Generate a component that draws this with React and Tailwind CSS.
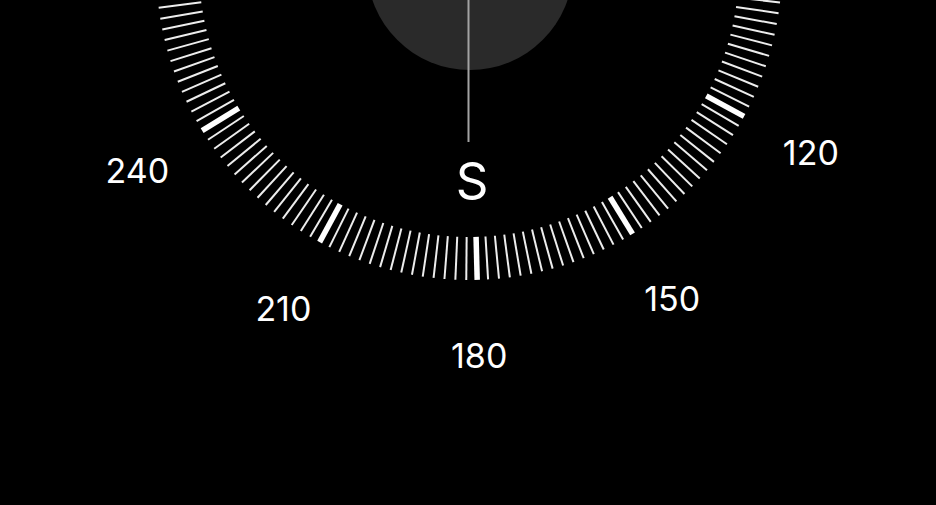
import React from "react";

// dial geometry (centre sits above the visible area)
const CX = 469;
const CY = -33;
const R_OUT = 313;
const R_IN = 270;
const R_LABEL = 389;
const TILT = -1.5; // dial is turned a little counter-clockwise

const rad = (deg) => (deg * Math.PI) / 180;

const polar = (r, deg) => ({
  x: CX + r * Math.sin(rad(deg)),
  y: CY - r * Math.cos(rad(deg)),
});

const ticks = Array.from({ length: 180 }, (_, i) => i * 2);
const labels = [120, 150, 180, 210, 240];

const Dial = () => {
  return (
    <svg
      width="936"
      height="505"
      viewBox="0 0 936 505"
      className="block font-['Inter',sans-serif]"
    >
      {/* level disc */}
      <circle cx={470} cy={CY} r={103} fill="#2a2a2a" />

      {/* heading line */}
      <line x1={468.5} y1={CY} x2={468.5} y2={142} stroke="#a3a3a3" strokeWidth="2" />

      {/* tick ring */}
      <g transform={`rotate(${TILT} ${CX} ${CY})`}>
        {ticks.map((deg) => {
          const major = deg % 30 === 0;
          const a = polar(R_IN, deg);
          const b = polar(R_OUT, deg);
          return (
            <line
              key={deg}
              x1={a.x}
              y1={a.y}
              x2={b.x}
              y2={b.y}
              stroke={major ? "#ffffff" : "#ededed"}
              strokeWidth={major ? 5.5 : 2}
            />
          );
        })}
      </g>

      {/* degree labels */}
      {labels.map((deg) => {
        const p = polar(R_LABEL, deg + TILT);
        return (
          <text
            key={deg}
            x={p.x}
            y={p.y + 12.4}
            textAnchor="middle"
            fontSize="34"
            fill="#ffffff"
          >
            {deg}
          </text>
        );
      })}

      <text x={472} y={199} textAnchor="middle" fontSize="51" fill="#ffffff">
        S
      </text>
    </svg>
  );
};

export default function App() {
  return (
    <div className="w-full h-screen bg-black overflow-hidden">
      <Dial />
    </div>
  );
}
